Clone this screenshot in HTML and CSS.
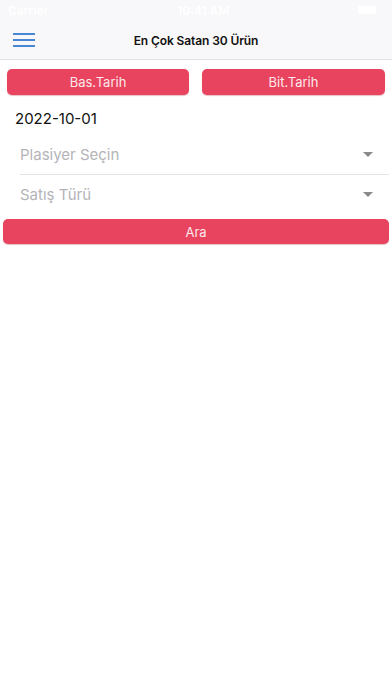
FILE: index.html
```html
<!DOCTYPE html>
<html lang="tr">
<head>
<meta charset="utf-8">
<title>En Çok Satan 30 Ürün</title>
<link rel="stylesheet" href="styles.css">
</head>
<body>
<div class="top">
  <div class="status">
    <span class="carrier">Carrier</span>
    <span class="time">10:41 AM</span>
    <span class="battery"></span>
  </div>
  <div class="navbar">
    <button class="menu" aria-label="Menü">
      <svg width="22" height="14" viewBox="0 0 22 14"><path d="M0 1h22M0 7h22M0 13h22" stroke="#4a86d6" stroke-width="2"/></svg>
    </button>
    <div class="title">En Çok Satan 30 Ürün</div>
  </div>
</div>
<main class="content">
  <div class="date-row">
    <button class="btn">Bas.Tarih</button>
    <button class="btn">Bit.Tarih</button>
  </div>
  <div class="date">2022-10-01</div>
  <div class="select first"><span>Plasiyer Seçin</span><i class="caret"></i></div>
  <div class="select"><span>Satış Türü</span><i class="caret"></i></div>
  <button class="btn wide">Ara</button>
</main>
</body>
</html>
```
FILE: styles.css
```css
* { box-sizing: border-box; }
html, body { margin: 0; padding: 0; background: #fff; }
body { font-family: Inter, "Liberation Sans", Arial, sans-serif; width: 392px; height: 696px; }
.top { background: #f8f7f9; border-bottom: 1px solid #e2e2e4; }
.status { height: 20px; display: flex; align-items: center; justify-content: space-between; padding: 0 8px; color: #fff; font-size: 12px; font-weight: 600; }
.battery { width: 18px; height: 8px; background: #fff; border-radius: 2px; margin-right: 8px; }
.navbar { height: 39px; position: relative; display: flex; align-items: center; justify-content: center; }
.menu { position: absolute; left: 13px; top: 13px; padding: 0; border: 0; background: none; line-height: 0; }
.title { font-size: 12px; font-weight: 600; color: #111; margin-top: 2px; letter-spacing: -0.1px; }
.content { padding: 9px 3px 0; }
.date-row { display: flex; justify-content: space-between; padding: 0 4px; }
.btn { background: #e9445f; color: #fbe9ec; border: 0; border-radius: 5px; font-family: inherit; font-size: 13px; height: 26px; width: 182px; padding: 0; box-shadow: 0 1px 1px rgba(150,0,20,0.25); }
.date-row .btn:last-child { width: 183px; }
.date { font-size: 15px; color: #111; margin: 14px 0 0 12px; height: 20px; line-height: 20px; }
.select { margin-left: 17px; height: 40px; display: flex; align-items: center; justify-content: space-between; padding: 0 16px 0 0; color: #b4b4b8; font-size: 15px; }
.select.first { margin-top: 5px; }
.select + .select { border-top: 1px solid #e4e4e6; }
.caret { width: 0; height: 0; border-left: 5px solid transparent; border-right: 5px solid transparent; border-top: 5px solid #8a8a8d; }
.btn.wide { display: block; width: 386px; height: 25px; margin-top: 5px; font-size: 13px; }
```
